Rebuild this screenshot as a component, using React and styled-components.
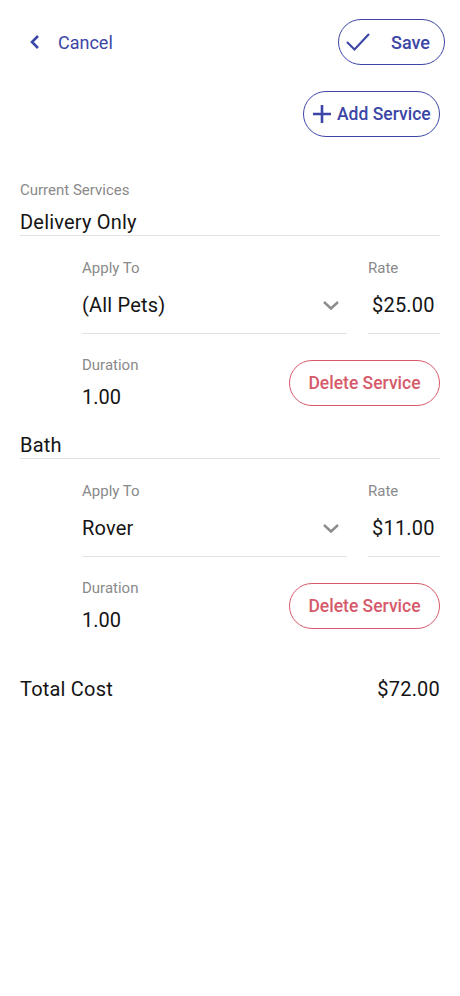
import React from 'react'
import { styled, createGlobalStyle } from 'styled-components'

const GlobalStyle = createGlobalStyle`
  html, body {
    margin: 0;
    padding: 0;
    background: #ffffff;
    font-family: Roboto, "Noto Sans", Arial, sans-serif;
  }
`

const BLUE = '#3c46a6'
const RED = '#d65a6a'
const GRAY = '#8a8a8a'
const LINE = '#e2e2e2'

const Page = styled.div`
  width: 460px;
  min-height: 996px;
  box-sizing: border-box;
  padding: 19px 20px 0 20px;
  background: #fff;
`

const Header = styled.div`
  display: flex;
  align-items: center;
  justify-content: space-between;
`

const BackLink = styled.div`
  display: flex;
  align-items: center;
  gap: 17px;
  padding-left: 9px;
  color: ${BLUE};
  font-size: 18px;
`

const PillButton = styled.button`
  display: flex;
  align-items: center;
  box-sizing: border-box;
  height: 46px;
  border: 1.5px solid ${(p) => p.$color};
  border-radius: 23px;
  background: #fff;
  color: ${(p) => p.$color};
  font-family: Roboto, "Noto Sans", Arial, sans-serif;
  font-size: ${(p) => p.$size || 18}px;
  font-weight: 500;
  cursor: pointer;
  padding: 0;
`

const SaveButton = styled(PillButton)`
  width: 107px;
  margin-right: -5px;
  padding-left: 6px;
  gap: 20px;
`

const AddRow = styled.div`
  display: flex;
  justify-content: flex-end;
  margin-top: 26px;
`

const AddButton = styled(PillButton)`
  width: 137px;
  padding-left: 8px;
  gap: 5px;
`

const SectionLabel = styled.div`
  margin-top: 45px;
  font-size: 15px;
  line-height: 16px;
  color: ${GRAY};
`

const ServiceName = styled.div`
  margin-top: ${(p) => p.$top}px;
  font-size: 20px;
  letter-spacing: 0.2px;
  line-height: 24px;
  color: #141414;
  border-bottom: 1px solid ${LINE};
  padding-bottom: 1px;
`

const Details = styled.div`
  padding-left: 62px;
`

const FieldRow = styled.div`
  display: flex;
  gap: 21px;
  margin-top: 23px;
`

const Field = styled.div`
  display: flex;
  flex-direction: column;
  min-width: 0;
  flex: ${(p) => (p.$grow ? '1 1 auto' : '0 0 72px')};
`

const Label = styled.div`
  font-size: 15px;
  line-height: 18px;
  color: ${GRAY};
`

const Input = styled.div`
  display: flex;
  align-items: center;
  justify-content: space-between;
  height: 56px;
  border-bottom: 1px solid ${LINE};
  font-size: 20px;
  letter-spacing: 0.2px;
  white-space: nowrap;
  color: #141414;
  padding: 0 ${(p) => p.$right ?? 7}px 0 ${(p) => p.$indent || 0}px;
`

const DurationRow = styled.div`
  display: flex;
  align-items: center;
  justify-content: space-between;
  margin-top: 22px;
`

const Value = styled.div`
  margin-top: 11px;
  font-size: 20px;
  line-height: 24px;
  color: #141414;
`

const DeleteButton = styled(PillButton)`
  width: 151px;
  justify-content: center;
`

const TotalRow = styled.div`
  display: flex;
  justify-content: space-between;
  margin-top: 45px;
  font-size: 20px;
  letter-spacing: 0.2px;
  line-height: 24px;
  color: #141414;
`

const ChevronLeft = () => (
  <svg width="12" height="16" viewBox="0 0 12 16">
    <path d="M9 2 L3 8 L9 14" fill="none" stroke={BLUE} strokeWidth="2.6" />
  </svg>
)

const CheckIcon = () => (
  <svg width="26" height="22" viewBox="0 0 26 22">
    <path d="M2 11 L9.5 18.5 L24 3" fill="none" stroke={BLUE} strokeWidth="2.1" />
  </svg>
)

const PlusIcon = () => (
  <svg width="20" height="20" viewBox="0 0 20 20">
    <path d="M10 1 V19 M1 10 H19" fill="none" stroke={BLUE} strokeWidth="2.6" />
  </svg>
)

const ChevronDown = () => (
  <svg width="18" height="12" viewBox="0 0 18 12">
    <path d="M2 3 L9 9.5 L16 3" fill="none" stroke="#8c8c8c" strokeWidth="2.4" />
  </svg>
)

const services = [
  { name: 'Delivery Only', applyTo: '(All Pets)', rate: '$25.00', duration: '1.00' },
  { name: 'Bath', applyTo: 'Rover', rate: '$11.00', duration: '1.00' },
]

function ServiceBlock({ service, first }) {
  return (
    <>
      <ServiceName $top={first ? 12 : 24}>{service.name}</ServiceName>
      <Details>
        <FieldRow>
          <Field $grow>
            <Label>Apply To</Label>
            <Input>
              {service.applyTo}
              <ChevronDown />
            </Input>
          </Field>
          <Field>
            <Label>Rate</Label>
            <Input $indent={4} $right={0}>{service.rate}</Input>
          </Field>
        </FieldRow>
        <DurationRow>
          <div>
            <Label>Duration</Label>
            <Value>{service.duration}</Value>
          </div>
          <DeleteButton $color={RED} $size={17.5}>Delete Service</DeleteButton>
        </DurationRow>
      </Details>
    </>
  )
}

export default function App() {
  return (
    <Page>
      <GlobalStyle />
      <Header>
        <BackLink>
          <ChevronLeft />
          Cancel
        </BackLink>
        <SaveButton $color={BLUE}>
          <CheckIcon />
          Save
        </SaveButton>
      </Header>
      <AddRow>
        <AddButton $color={BLUE} $size={17.5}>
          <PlusIcon />
          Add Service
        </AddButton>
      </AddRow>
      <SectionLabel>Current Services</SectionLabel>
      {services.map((s, i) => (
        <ServiceBlock key={s.name} service={s} first={i === 0} />
      ))}
      <TotalRow>
        <span>Total Cost</span>
        <span>$72.00</span>
      </TotalRow>
    </Page>
  )
}
